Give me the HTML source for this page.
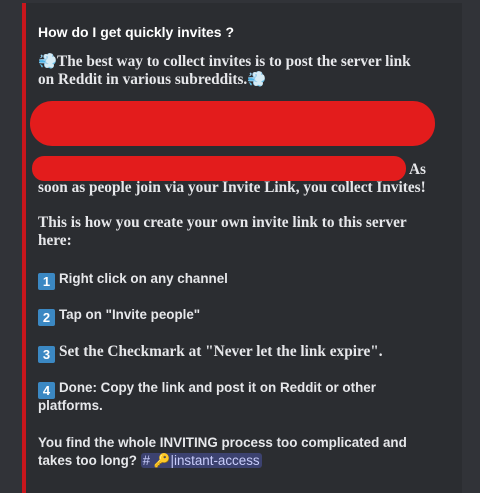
<html><head><style>
body{margin:0;width:480px;height:482px;background:#313338;overflow:hidden;font-family:"Liberation Sans",sans-serif;color:#e6e7ea}
.p{position:absolute;left:22px;top:3px;width:436px;height:490px;background:#2b2d31;border-left:4px solid #c8161c}
.t{position:absolute;left:38px;white-space:nowrap;font-size:13.4px;font-weight:bold}
.s{font-family:"Liberation Serif",serif;font-weight:bold;font-size:15.3px}
.n{display:inline-block;width:17px;height:17px;background:#3b88c3;color:#fff;font-family:"Liberation Sans",sans-serif;font-weight:bold;text-align:center;line-height:17px;font-size:13px;border-radius:2px;margin-right:4px;vertical-align:-3px}
.r{position:absolute;background:#e31c1c}
.m{background:#3c4270;color:#c9cdfb;padding:0 2px;border-radius:3px;font-weight:normal}
</style></head><body>
<div class="p"></div>
<div class="t" style="top:24px;font-size:14px;color:#fff">How do I get quickly invites ?</div>
<div class="t s" style="top:52px">💨The best way to collect invites is to post the server link</div>
<div class="t s" style="top:70px">on Reddit in various subreddits.💨</div>
<div class="r" style="left:30px;top:101px;width:405px;height:45px;border-radius:22px"></div>
<div class="r" style="left:32px;top:156px;width:374px;height:25px;border-radius:12px"></div>
<div class="t s" style="top:161px;left:409px">As</div>
<div class="t s" style="top:179px">soon as people join via your Invite Link, you collect Invites!</div>
<div class="t s" style="top:214px">This is how you create your own invite link to this server</div>
<div class="t s" style="top:232px">here:</div>
<div class="t" style="top:271px"><span class="n">1</span>Right click on any channel</div>
<div class="t" style="top:307px"><span class="n">2</span>Tap on "Invite people"</div>
<div class="t s" style="top:343px"><span class="n">3</span>Set the Checkmark at "Never let the link expire".</div>
<div class="t" style="top:380px"><span class="n">4</span>Done: Copy the link and post it on Reddit or other</div>
<div class="t" style="top:398px">platforms.</div>
<div class="t" style="top:435px">You find the whole INVITING process too complicated and</div>
<div class="t" style="top:453px">takes too long? <span class="m"># 🔑|instant-access</span></div>
</body></html>
